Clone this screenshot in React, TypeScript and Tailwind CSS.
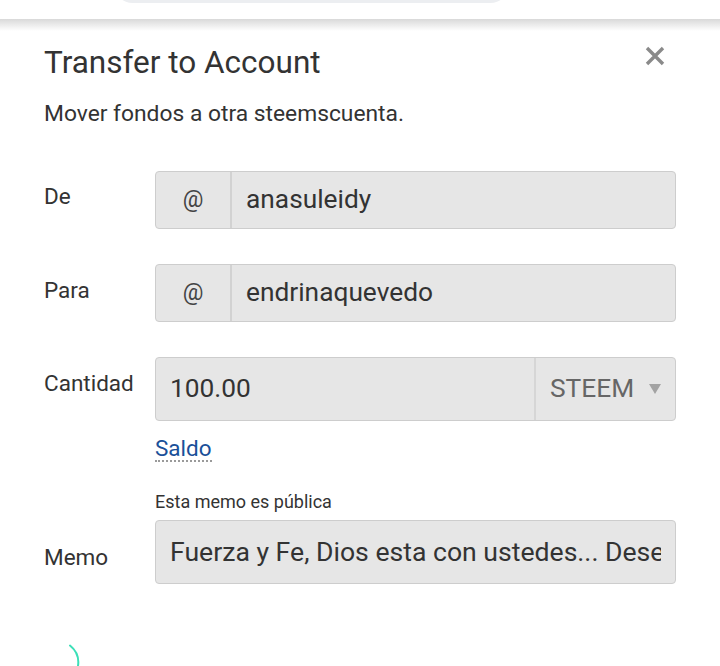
import React from "react";

/**
 * Steem wallet "Transfer to Account" modal, Spanish locale, as seen on mobile.
 */
function CloseMark() {
  return (
    <svg width="22" height="22" viewBox="0 0 22 22" fill="none" aria-hidden="true">
      <path d="M3 3l16 16M19 3L3 19" stroke="#8a8a8a" strokeWidth="3.4" strokeLinecap="butt" />
    </svg>
  );
}

function Spinner() {
  return (
    <svg width="48" height="26" viewBox="0 0 48 26" fill="none" aria-hidden="true">
      <path d="M28 5.5A22 22 0 0 1 36 26" stroke="#3ddfb8" strokeWidth="2" strokeLinecap="round" />
    </svg>
  );
}

function AtField({ value }: { value: string }) {
  return (
    <div className="flex h-[58px] flex-1 overflow-hidden rounded-[4px] border border-[#cdcdcd] bg-[#e6e6e6]">
      <div className="flex w-[76px] shrink-0 items-center justify-center border-r-2 border-[#d2d2d2] text-[23px] text-[#444]">
        @
      </div>
      <div className="flex flex-1 items-center pl-[14px] text-[26.3px] text-[#333]">{value}</div>
    </div>
  );
}

const label = "w-[111px] shrink-0 text-[22.5px] leading-[28px] text-[#333]";

export default function App() {
  return (
    <div className="h-[666px] w-[720px] overflow-hidden bg-white" style={{ fontFamily: "Roboto, 'Liberation Sans', sans-serif" }}>
      <div className="h-[19px] overflow-hidden bg-white">
        <div className="-mt-[37px] ml-[113px] h-[40px] w-[397px] rounded-full bg-[#eceef1]" />
      </div>
      <div className="h-[12px] bg-gradient-to-b from-[#d9d9d9] to-white" />

      <div className="px-[44px] pt-[13px]">
        <div className="flex items-start justify-between">
          <h1 className="text-[31.5px] leading-[38px] text-[#333]">Transfer to Account</h1>
          <div className="mr-[10px] mt-[1px]">
            <CloseMark />
          </div>
        </div>
        <p className="mt-[18px] text-[22.8px] leading-[28px] text-[#333]">Mover fondos a otra steemscuenta.</p>

        <div className="mt-[43px] flex items-start">
          <div className={`${label} pt-[11px]`}>De</div>
          <AtField value="anasuleidy" />
        </div>

        <div className="mt-[35px] flex items-start">
          <div className={`${label} pt-[12px]`}>Para</div>
          <AtField value="endrinaquevedo" />
        </div>

        <div className="mt-[35px] flex items-start">
          <div className={`${label} pt-[12px]`}>Cantidad</div>
          <div className="flex-1">
            <div className="flex h-[64px] overflow-hidden rounded-[4px] border border-[#cdcdcd] bg-[#e6e6e6]">
              <div className="flex flex-1 items-center pl-[14px] text-[26.3px] text-[#333]">100.00</div>
              <div className="flex w-[141px] shrink-0 items-center justify-between border-l-2 border-[#d6d6d6] pl-[14px] pr-[14px] text-[26.3px] text-[#666]">
                <span>STEEM</span>
                <span className="h-0 w-0 border-x-[6px] border-t-[10px] border-x-transparent border-t-[#a3a3a3]" />
              </div>
            </div>
            <div className="mt-[15px]">
              <span className="inline-block border-b-2 border-dotted border-[#9a9a9a] text-[22.5px] leading-[24px] text-[#1a5099]">
                Saldo
              </span>
            </div>
          </div>
        </div>

        <div className="mt-[28px] flex items-start">
          <div className={`${label} pt-[52px]`}>Memo</div>
          <div className="min-w-0 flex-1">
            <div className="text-[18px] leading-[22px] text-[#333]">Esta memo es pública</div>
            <div className="mt-[7px] flex h-[64px] items-center rounded-[4px] border border-[#cdcdcd] bg-[#e6e6e6] px-[14px]">
              <div className="overflow-hidden whitespace-nowrap text-[26.6px] text-[#333]">
                Fuerza y Fe, Dios esta con ustedes... Deseamos lo mejor
              </div>
            </div>
          </div>
        </div>
      </div>

      <div className="ml-[42px] mt-[56px]">
        <Spinner />
      </div>
    </div>
  );
}
